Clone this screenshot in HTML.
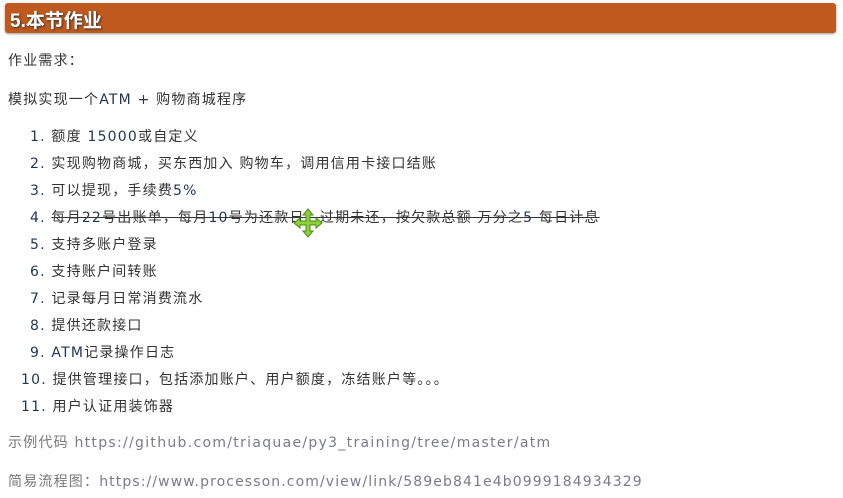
<!DOCTYPE html>
<html><head><meta charset="utf-8"><style>
body{margin:0;width:843px;height:498px;background:#fff;font-family:"DejaVu Sans","Noto Sans CJK SC",sans-serif;font-size:14px;color:#333;position:relative;overflow:hidden;letter-spacing:1.2px}
.h{position:absolute;left:5px;top:3px;width:831px;height:30px;background:#c0591d;border-radius:3px;box-shadow:0 1px 2px #999}
.h span{position:absolute;left:5px;top:3px;font-size:19px;font-weight:bold;color:#fff;text-shadow:1px 1px 2px #333;font-family:"Liberation Sans","Noto Sans CJK SC",sans-serif;letter-spacing:0}
.t{position:absolute;left:8px;white-space:nowrap;line-height:20px}
.n{color:#1e3556}
.li{position:absolute;white-space:nowrap;line-height:20px}
.g{color:#777}
.u{color:#7a7a8a;letter-spacing:1.3px}
</style></head><body>
<div class="h"><span>5.本节作业</span></div>
<div class="t" style="top:51px">作业需求：</div>
<div class="t" style="top:90px">模拟实现一个<span class="n">ATM</span> + 购物商城程序</div>
<div class="li" style="left:30px;top:127px"><span class="n">1.</span> 额度 <span class="n">15000</span>或自定义</div>
<div class="li" style="left:30px;top:154px"><span class="n">2.</span> 实现购物商城，买东西加入 购物车，调用信用卡接口结账</div>
<div class="li" style="left:30px;top:181px"><span class="n">3.</span> 可以提现，手续费<span class="n">5%</span></div>
<div class="li" style="left:30px;top:208px"><span class="n">4.</span> <s>每月<span class="n">22</span>号出账单，每月<span class="n">10</span>号为还款日，过期未还，按欠款总额 万分之<span class="n">5</span> 每日计息</s></div>
<div class="li" style="left:30px;top:235px"><span class="n">5.</span> 支持多账户登录</div>
<div class="li" style="left:30px;top:262px"><span class="n">6.</span> 支持账户间转账</div>
<div class="li" style="left:30px;top:289px"><span class="n">7.</span> 记录每月日常消费流水</div>
<div class="li" style="left:30px;top:316px"><span class="n">8.</span> 提供还款接口</div>
<div class="li" style="left:30px;top:343px"><span class="n">9.</span> <span class="n">ATM</span>记录操作日志</div>
<div class="li" style="left:21px;top:370px"><span class="n">10.</span> 提供管理接口，包括添加账户、用户额度，冻结账户等。。。</div>
<div class="li" style="left:21px;top:397px"><span class="n">11.</span> 用户认证用装饰器</div>
<div class="t g" style="top:433px">示例代码 <span class="u">https://github.com/triaquae/py3_training/tree/master/atm</span></div>
<div class="t g" style="top:472px">简易流程图：<span class="u" style="letter-spacing:1.1px">https://www.processon.com/view/link/589eb841e4b0999184934329</span></div>
<svg style="position:absolute;left:293px;top:208px" width="30" height="30" viewBox="0 0 30 30">
<g stroke="#4a8a10" stroke-width="1" fill="#8cd23c">
<path d="M15 1 L20 7 L17 7 L17 13 L23 13 L23 10 L29 15 L23 20 L23 17 L17 17 L17 23 L20 23 L15 29 L10 23 L13 23 L13 17 L7 17 L7 20 L1 15 L7 10 L7 13 L13 13 L13 7 L10 7 Z"/>
</g></svg>
</body></html>
